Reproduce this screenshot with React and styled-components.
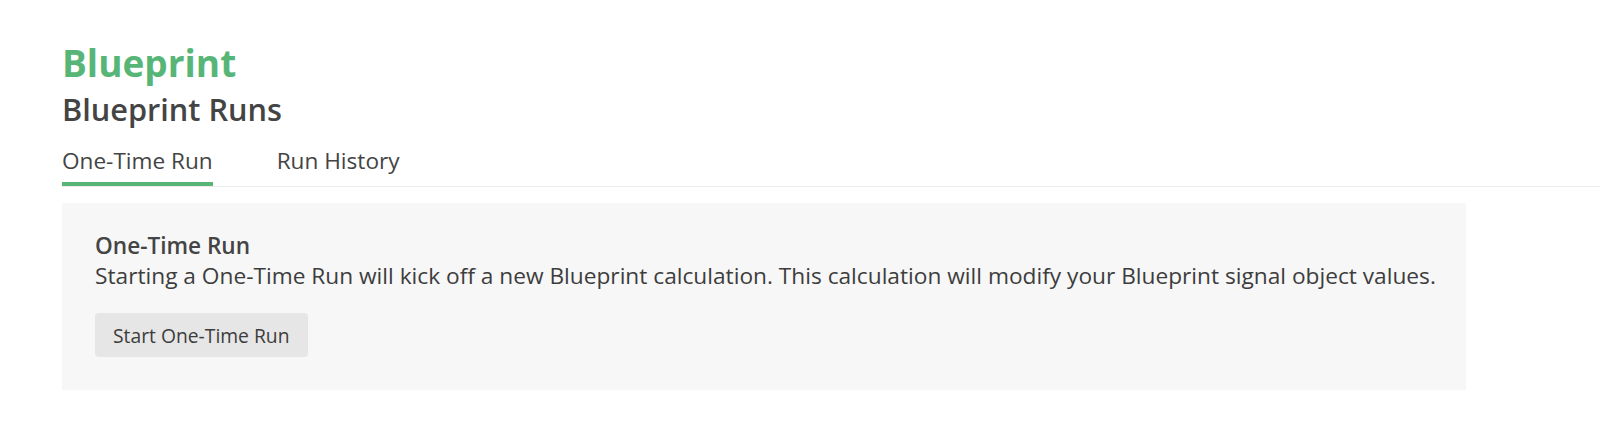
import React, { useState } from 'react';
import styled, { createGlobalStyle } from 'styled-components';

const GlobalStyle = createGlobalStyle`
  html, body {
    margin: 0;
    padding: 0;
    background: #ffffff;
  }
  body {
    font-family: "Open Sans", "Noto Sans", "Liberation Sans", sans-serif;
    color: #444444;
  }
`;

const Page = styled.div`
  padding: 42px 0 0 62px;
`;

const Brand = styled.h1`
  margin: 0;
  font-size: 37px;
  line-height: 42px;
  font-weight: 700;
  color: #57b677;
`;

const Title = styled.h2`
  margin: 7px 0 0;
  font-size: 30.7px;
  line-height: 36px;
  font-weight: 600;
  color: #444444;
`;

const TabBar = styled.div`
  display: flex;
  gap: 64px;
  margin-top: 19px;
  border-bottom: 1px solid #ececec;
`;

const Tab = styled.button`
  appearance: none;
  background: none;
  border: 0;
  padding: 0 0 6px;
  margin: 0;
  font-family: inherit;
  font-size: 22.6px;
  line-height: 30px;
  font-weight: 400;
  color: #444444;
  cursor: pointer;
  border-bottom: 4px solid ${p => (p.$active ? '#57b677' : 'transparent')};
`;

const Panel = styled.section`
  width: 1404px;
  box-sizing: border-box;
  margin-top: 16px;
  padding: 28px 33px 33px;
  background: #f7f7f7;
`;

const PanelTitle = styled.h3`
  margin: 0;
  font-size: 22.6px;
  line-height: 30px;
  font-weight: 600;
  color: #444444;
`;

const PanelText = styled.p`
  margin: 0;
  font-size: 22.7px;
  line-height: 30px;
  white-space: nowrap;
  color: #3d3d3d;
`;

const Button = styled.button`
  appearance: none;
  margin-top: 22px;
  height: 44px;
  padding: 0 18px;
  border: 0;
  border-radius: 4px;
  background: #e6e6e6;
  font-family: inherit;
  font-size: 19.3px;
  color: #3d3d3d;
  cursor: pointer;
`;

const tabs = ['One-Time Run', 'Run History'];

export default function App() {
  const [active, setActive] = useState(0);
  return (
    <>
      <GlobalStyle />
      <Page>
        <Brand>Blueprint</Brand>
        <Title>Blueprint Runs</Title>
        <TabBar>
          {tabs.map((t, i) => (
            <Tab key={t} $active={i === active} onClick={() => setActive(i)}>
              {t}
            </Tab>
          ))}
        </TabBar>
        <Panel>
          <PanelTitle>One-Time Run</PanelTitle>
          <PanelText>
            Starting a One-Time Run will kick off a new Blueprint calculation. This calculation will modify your Blueprint signal object values.
          </PanelText>
          <Button>Start One-Time Run</Button>
        </Panel>
      </Page>
    </>
  );
}
